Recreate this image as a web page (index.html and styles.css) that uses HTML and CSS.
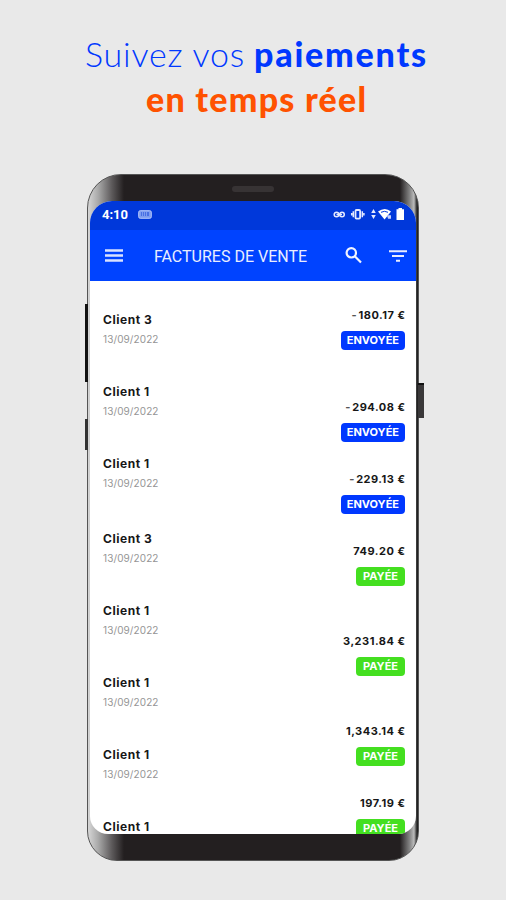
FILE: index.html
```html
<!DOCTYPE html>
<html lang="fr">
<head>
<meta charset="utf-8">
<title>Factures de vente</title>
<link rel="stylesheet" href="styles.css">
</head>
<body>
<h1 class="headline">
  <span class="line blue"><span class="light">Suivez vos</span> <span class="strong">paiements</span></span>
  <span class="line orange">en temps réel</span>
</h1>
<main class="phone">
  <i class="side volume"></i><i class="side assistant"></i><i class="side power"></i>
  <div class="bezel"><i class="speaker"></i></div>
  <section class="screen">
    <div class="status">
      <span class="clock">4:10</span>
      <svg class="keyboard" width="14" height="9" viewBox="0 0 14 9"><rect x=".7" y=".7" width="12.6" height="7.6" rx="1.5" fill="#7b9bef" stroke="#b7c9fa"/><path d="M3 3h1m1 0h1m1 0h1m1 0h2M3 5h1m1 0h1m1 0h1m1 0h2" stroke="#1745d8"/></svg>
      <svg class="system" width="74" height="14" viewBox="0 0 74 14" fill="none" stroke="#e4eaff" stroke-width="1.5">
        <circle cx="3.500" cy="6.500" r="2.300"/><circle cx="9" cy="6.500" r="2.300"/><path d="M3.500 6.500h5.500"/>
        <rect x="22.500" y="2" width="4.600" height="8.600" rx="1" stroke-width="1.800"/><path d="M20.300 3.300v6M29.300 3.300v6M18.700 5v2.600M30.900 5v2.600"/>
        <path d="M40.500 1l2.300 4h-4.600zM40.500 11l2.300-4h-4.600z" fill="#e4eaff" stroke="none"/>
        <path d="M45 3.500q7-5 13 0l-6.500 8z" fill="#fff" stroke="none"/><path d="M48 4.300q3.500-2 7 0" stroke="#0038da" stroke-width="1"/><path d="M54 7.300h4v3.500h-3z" fill="#c4d1ff" stroke="none"/>
        <path d="M63.500 1.300h2V0h3.500v1.300h2V12h-7.500z" fill="#fff" stroke="none"/>
      </svg>
    </div>
    <header class="appbar">
      <svg class="menu" width="18" height="14" viewBox="0 0 18 14"><path d="M0 1.500h18M0 6.500h18M0 11.500h18" stroke="#d9e2ff" stroke-width="2.300"/></svg>
      <span class="title">FACTURES DE VENTE</span>
      <svg class="search" width="17" height="17" viewBox="0 0 17 17" fill="none" stroke="#f1f4ff" stroke-width="2.200"><circle cx="6.300" cy="5.800" r="4.700"/><path d="M9.800 9.300l6.200 6.200"/></svg>
      <svg class="filter" width="18" height="12" viewBox="0 0 18 12"><path d="M0 1.200h18M3 6h12M7 10.800h4" stroke="#e8edff" stroke-width="2.100"/></svg>
    </header>
    <div class="invoices">
      <div class="clients">
        <article><b>Client 3</b><time>13/09/2022</time></article>
        <article><b>Client 1</b><time>13/09/2022</time></article>
        <article class="last-sent"><b>Client 1</b><time>13/09/2022</time></article>
        <article><b>Client 3</b><time>13/09/2022</time></article>
        <article><b>Client 1</b><time>13/09/2022</time></article>
        <article><b>Client 1</b><time>13/09/2022</time></article>
        <article><b>Client 1</b><time>13/09/2022</time></article>
        <article class="cut"><b>Client 1</b></article>
      </div>
      <div class="amounts">
        <article class="first"><b><span class="minus">-</span>180.17 €</b><span class="tag">ENVOYÉE</span></article>
        <article><b><span class="minus">-</span>294.08 €</b><span class="tag">ENVOYÉE</span></article>
        <article><b><span class="minus">-</span>229.13 €</b><span class="tag">ENVOYÉE</span></article>
        <article class="tall"><b>749.20 €</b><span class="tag paid">PAYÉE</span></article>
        <article class="tall"><b>3,231.84 €</b><span class="tag paid">PAYÉE</span></article>
        <article><b>1,343.14 €</b><span class="tag paid">PAYÉE</span></article>
        <article class="cut"><b>197.19 €</b><span class="tag paid">PAYÉE</span></article>
      </div>
    </div>
  </section>
</main>
</body>
</html>
```
FILE: styles.css
```css
* { box-sizing: border-box; }
body { margin: 0; width: 506px; height: 900px; overflow: hidden; background: #e9e9e9; }
svg { display: block; flex: none; }
.headline { margin: 0; padding-top: 31px; height: 174px; font: 900 34px/45px Lato, sans-serif; }
.line { display: flex; white-space: nowrap; }
.blue { color: #0038ff; padding-left: 85px; }
.light { width: 169px; font-weight: 300; letter-spacing: .8px; }
.strong { letter-spacing: 1.8px; }
.orange { color: #ff5200; padding-left: 146px; letter-spacing: 1.25px; }
.phone { position: relative; width: 332px; height: 687px; margin-left: 87px; padding: 1px 3px; border: 1px solid #555; border-radius: 34px 34px 30px 30px; background: linear-gradient(90deg, #d6d6d6 0, #aaa 10px, #5c595a 24px, #231f20 36px, #231f20 312px, #888 322px, #bbb 326px, #222 329px); }
.side { position: absolute; background: #111; }
.volume { left: -3px; top: 129px; width: 3px; height: 78px; }
.assistant { left: -3px; top: 244px; width: 3px; height: 31px; background: #333; }
.power { right: -6px; top: 208px; width: 6px; height: 35px; background: #3a3839; border-top: 2px solid #111; }
.bezel { height: 25px; padding: 10px 0 0 141px; }
.speaker { display: block; width: 42px; height: 6px; border-radius: 3px; background: #373334; }
.screen { width: 326px; height: 633px; margin-left: -1px; overflow: hidden; border-radius: 22px 22px 18px 18px; background: #fff; }
.status { height: 29px; display: flex; align-items: center; padding: 0 9px 2px 12px; background: #0038da; }
.clock { width: 36px; color: #fff; font: 700 13px/16px Roboto, sans-serif; }
.system { margin-left: auto; }
.appbar { height: 51px; display: flex; align-items: center; padding: 0 9px 0 15px; background: #0043ff; }
.title { margin: 2px 0 0 31px; width: 191px; color: #e9eeff; font: 400 16px/20px Roboto, sans-serif; white-space: nowrap; }
.filter { margin-left: auto; }
.invoices { height: 553px; display: flex; justify-content: space-between; padding: 0 11px 0 13px; color: #171717; }
.clients { padding-top: 30px; }
.amounts { padding-top: 26px; }
article { height: 72px; display: flex; flex-direction: column; }
.clients b { font: 700 12px/18px Inter, sans-serif; letter-spacing: .55px; }
time { margin-top: 2px; color: #959595; font: 400 10px/16px Inter, sans-serif; letter-spacing: .1px; }
.clients .last-sent { height: 75px; }
.amounts article { align-items: flex-end; }
.amounts b { font: 700 11px/16px Inter, sans-serif; letter-spacing: .5px; margin-right: -.5px; white-space: nowrap; }
.minus { color: #555; letter-spacing: 1.8px; }
.tag { margin-top: 8px; height: 19px; padding: 0 6px; border-radius: 4px; background: #0038ff; color: #fff; font: 700 11px/19px Inter, sans-serif; }
.paid { background: #44df20; padding: 0 7px; }
.amounts .first { height: 91.5px; }
.amounts .tall { height: 90px; }
.clients .cut, .amounts .cut { height: 30px; }
```
